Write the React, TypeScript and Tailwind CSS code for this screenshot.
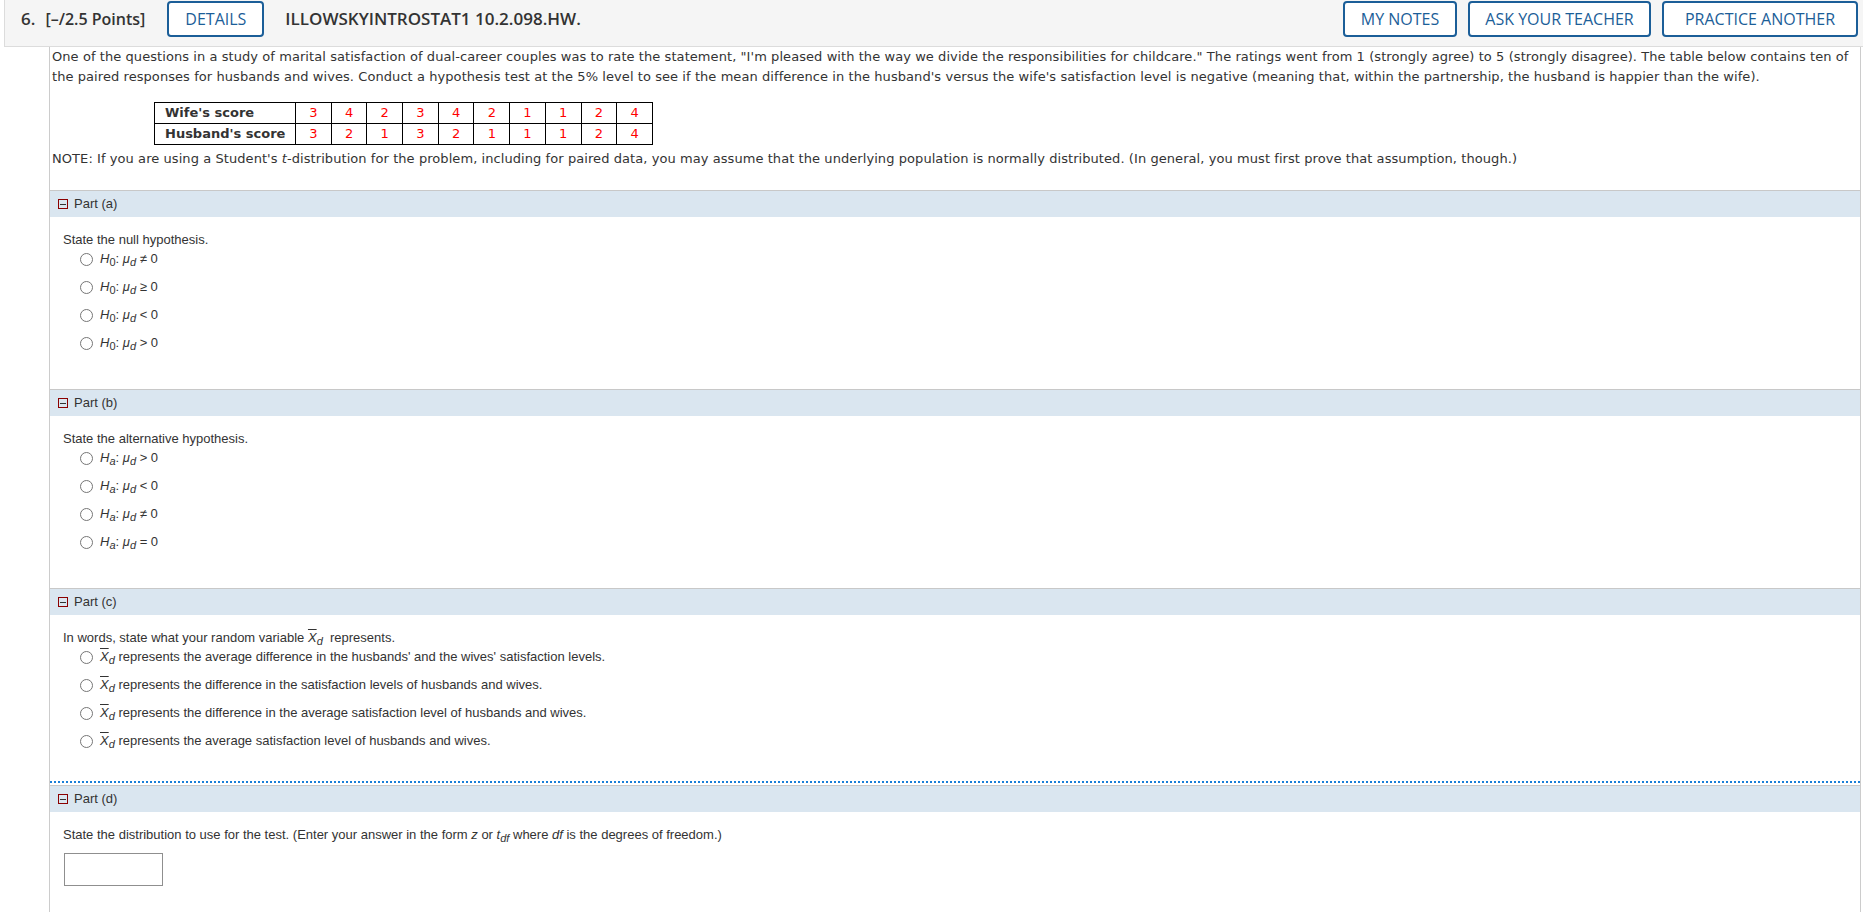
import React from 'react';

const hdrFont = { fontFamily: '"Open Sans", "Liberation Sans", sans-serif' };
const qFont = { fontFamily: '"DejaVu Sans", Verdana, sans-serif' };
const partFont = { fontFamily: '"Liberation Sans", Arial, sans-serif' };

const wife = [3, 4, 2, 3, 4, 2, 1, 1, 2, 4];
const husband = [3, 2, 1, 3, 2, 1, 1, 1, 2, 4];

function HdrButton({ label, w }: { label: string; w: string }) {
  return (
    <button className={`${w} h-[36px] flex items-center justify-center border-2 border-[#1b5e98] rounded-[4px] bg-white text-[16px] text-[#1b5e98] leading-none`} style={hdrFont}>
      {label}
    </button>
  );
}

function Radio() {
  return <span className="inline-block w-[13px] h-[13px] rounded-full border border-[#767676] bg-white shrink-0" />;
}

function PartHeader({ label }: { label: string }) {
  return (
    <div className="h-[27px] border-t border-[#c8c8c8] bg-[#dae6f0] flex items-center pl-[8px] gap-[6px] text-[13px] text-[#333]" style={partFont}>
      <span className="w-[10px] h-[10px] border border-[#8b0000] flex items-center justify-center">
        <span className="w-[6px] h-[1px] bg-[#333]" />
      </span>
      <span>{label}</span>
    </div>
  );
}

// H_x: mu_d <op> 0
function Hyp({ sub, op }: { sub: string; op: string }) {
  return (
    <span className="text-[13px] text-[#333]">
      <i>H</i>
      <sub className={`text-[11px] relative top-[3px] ${sub === 'a' ? 'italic' : ''}`}>{sub}</sub>: <i>μ</i>
      <sub className="text-[11px] italic relative top-[3px]">d</sub> {op} 0
    </span>
  );
}

function Xbar() {
  return (
    <span>
      <i className="overline">X</i>
      <sub className="text-[11px] italic relative top-[3px]">d</sub>
    </span>
  );
}

function Option({ children }: { children: React.ReactNode }) {
  return (
    <div className="h-[20px] flex items-center gap-[7px] pl-[17px]">
      <Radio />
      <span>{children}</span>
    </div>
  );
}

export default function App() {
  return (
    <div className="w-[1863px] h-[912px] bg-white overflow-hidden text-[#333]">
      {/* top bar */}
      <div className="ml-[4px] h-[47px] bg-[#f5f5f5] border-l border-b border-[#dcdcdc] flex items-start justify-between pl-[16px] pr-[5px]" style={hdrFont}>
        <div className="h-[37px] flex items-center">
          <span className="text-[17px] font-semibold text-[#333]">6.</span>
          <span className="text-[16px] font-semibold text-[#333] ml-[10px] mr-[22px]">[–/2.5 Points]</span>
          <HdrButton label="DETAILS" w="w-[97px]" />
          <span className="text-[17px] font-semibold text-[#333] ml-[21px]">ILLOWSKYINTROSTAT1 10.2.098.HW.</span>
        </div>
        <div className="h-[37px] flex items-center gap-[11px]">
          <HdrButton label="MY NOTES" w="w-[114px]" />
          <HdrButton label="ASK YOUR TEACHER" w="w-[183px]" />
          <HdrButton label="PRACTICE ANOTHER" w="w-[196px]" />
        </div>
      </div>

      <div className="ml-[49px] w-[1812px] h-[865px] border-l border-r border-[#cccccc]">
        <div className="pl-[2px] pr-[2px] text-[13px] tracking-[0.07px] leading-[20px] text-[#333]" style={qFont}>
          <p>
            One of the questions in a study of marital satisfaction of dual-career couples was to rate the statement, "I'm pleased with the way we divide the responsibilities for childcare." The ratings went from 1 (strongly agree) to 5 (strongly disagree). The table below contains ten of the paired responses for husbands and wives. Conduct a hypothesis test at the 5% level to see if the mean difference in the husband's versus the wife's satisfaction level is negative (meaning that, within the partnership, the husband is happier than the wife).
          </p>
          <table className="ml-[102px] mt-[15px] border-collapse border border-black tracking-normal">
            <tbody>
              <tr className="h-[20px]">
                <th className="w-[141px] border border-black text-left font-bold pl-[10px] pr-[4px] py-0">Wife's score</th>
                {wife.map((n, i) => (
                  <td key={i} className="w-[35.7px] border border-black text-center text-[#ff0000] py-0">{n}</td>
                ))}
              </tr>
              <tr className="h-[20px]">
                <th className="border border-black text-left font-bold pl-[10px] pr-[4px] py-0">Husband's score</th>
                {husband.map((n, i) => (
                  <td key={i} className="border border-black text-center text-[#ff0000] py-0">{n}</td>
                ))}
              </tr>
            </tbody>
          </table>
          <p className="mt-[4px]">
            NOTE: If you are using a Student's <i>t</i>-distribution for the problem, including for paired data, you may assume that the underlying population is normally distributed. (In general, you must first prove that assumption, though.)
          </p>
        </div>

        <div className="mt-[21px] text-[13px] text-[#333]" style={partFont}>
          <PartHeader label="Part (a)" />
          <div className="pl-[13px] pt-[14px] pb-[36px]">
            <p className="leading-[18px]">State the null hypothesis.</p>
            <div className="flex flex-col gap-[8px]">
              <Option><Hyp sub="0" op="≠" /></Option>
              <Option><Hyp sub="0" op="≥" /></Option>
              <Option><Hyp sub="0" op="<" /></Option>
              <Option><Hyp sub="0" op=">" /></Option>
            </div>
          </div>

          <PartHeader label="Part (b)" />
          <div className="pl-[13px] pt-[14px] pb-[36px]">
            <p className="leading-[18px]">State the alternative hypothesis.</p>
            <div className="flex flex-col gap-[8px]">
              <Option><Hyp sub="a" op=">" /></Option>
              <Option><Hyp sub="a" op="<" /></Option>
              <Option><Hyp sub="a" op="≠" /></Option>
              <Option><Hyp sub="a" op="=" /></Option>
            </div>
          </div>

          <PartHeader label="Part (c)" />
          <div className="pl-[13px] pt-[14px] pb-[30px]">
            <p className="leading-[18px]">In words, state what your random variable <Xbar />&nbsp; represents.</p>
            <div className="flex flex-col gap-[8px]">
              <Option><Xbar /> represents the average difference in the husbands' and the wives' satisfaction levels.</Option>
              <Option><Xbar /> represents the difference in the satisfaction levels of husbands and wives.</Option>
              <Option><Xbar /> represents the difference in the average satisfaction level of husbands and wives.</Option>
              <Option><Xbar /> represents the average satisfaction level of husbands and wives.</Option>
            </div>
          </div>

          <div className="border-t-2 border-dotted border-[#1a7fd8] mb-[2px]" />
          <PartHeader label="Part (d)" />
          <div className="pl-[13px] pt-[14px]">
            <p className="leading-[18px]">
              State the distribution to use for the test. (Enter your answer in the form <i>z</i> or <i>t</i>
              <sub className="text-[11px] italic relative top-[3px]">df</sub> where <i>df</i> is the degrees of freedom.)
            </p>
            <div className="mt-[9px] w-[99px] h-[33px] border border-[#8f8f8f] bg-white ml-[1px]" />
          </div>
        </div>
      </div>
    </div>
  );
}
